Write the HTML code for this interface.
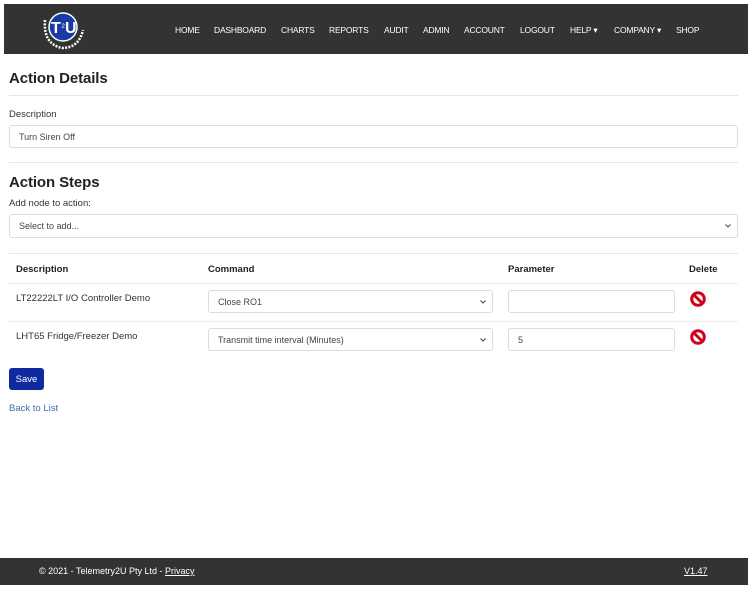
<!DOCTYPE html>
<html><head><style>
*{box-sizing:border-box;margin:0;padding:0}
body{width:756px;height:593px;background:#fff;font-family:"Liberation Sans",sans-serif;color:#222;position:relative;overflow:hidden}
.nav{position:absolute;left:4px;top:4px;width:744px;height:50px;background:#333331}
.nav a{position:absolute;top:21px;color:#fff;font-size:8.5px;letter-spacing:-0.2px}
.abs{position:absolute}
h2{position:absolute;font-size:15px;font-weight:bold;color:#222;left:9px;letter-spacing:-0.1px}
.hr{position:absolute;left:9px;width:729px;height:1px;background:#e6e6e6}
.lbl{position:absolute;font-size:9.5px;color:#333;left:9px}
.inp{position:absolute;border:1px solid #dcdcdc;border-radius:3px;background:#fff;font-size:9px;color:#444;padding-left:9px;display:flex;align-items:center}
.chev{position:absolute;right:6px;top:50%;margin-top:-3px;width:6px;height:6px}
.th{position:absolute;top:264px;font-size:9.5px;font-weight:bold;color:#222}
.td{position:absolute;font-size:9.5px;color:#333}
</style></head><body>
<div class="nav">
<svg class="abs" style="left:37px;top:2px" width="46" height="46" viewBox="0 0 46 46">
<circle cx="22" cy="21" r="14" fill="#1a3aa8" stroke="#fff" stroke-width="1.5"/>
<text x="10" y="27" font-size="16" font-weight="bold" fill="#fff" font-family="Liberation Sans">T</text>
<text x="20.5" y="22" font-size="6" fill="#fff" font-family="Liberation Sans">2</text>
<text x="24" y="27" font-size="16" font-weight="bold" fill="#fff" font-family="Liberation Sans">U</text>
<path d="M4 14 Q2 38 21 42 Q38 42 42 24" fill="none" stroke="#fff" stroke-width="2.5" stroke-dasharray="2 1.3"/>
</svg>
<a style="left:171px">HOME</a><a style="left:210px">DASHBOARD</a><a style="left:277px">CHARTS</a><a style="left:325px">REPORTS</a><a style="left:380px">AUDIT</a><a style="left:419px">ADMIN</a><a style="left:460px">ACCOUNT</a><a style="left:516px">LOGOUT</a><a style="left:566px">HELP ▾</a><a style="left:610px">COMPANY ▾</a><a style="left:672px">SHOP</a>
</div>
<h2 style="top:70px">Action Details</h2>
<div class="hr" style="top:95px"></div>
<div class="lbl" style="top:109px">Description</div>
<div class="inp" style="left:9px;top:125px;width:729px;height:23px">Turn Siren Off</div>
<div class="hr" style="top:162px"></div>
<h2 style="top:174px">Action Steps</h2>
<div class="lbl" style="top:198px">Add node to action:</div>
<div class="inp" style="left:9px;top:214px;width:729px;height:24px">Select to add...<svg class="chev" viewBox="0 0 6 6"><path d="M0.5 1.5L3 4L5.5 1.5" fill="none" stroke="#444" stroke-width="1"/></svg></div>
<div class="hr" style="top:253px"></div>
<div class="th" style="left:16px">Description</div><div class="th" style="left:208px">Command</div><div class="th" style="left:508px">Parameter</div><div class="th" style="left:689px">Delete</div>
<div class="hr" style="top:283px;background:#ececec"></div>
<div class="td" style="left:16px;top:293px">LT22222LT I/O Controller Demo</div>
<div class="inp" style="left:208px;top:290px;width:285px;height:23px">Close RO1<svg class="chev" viewBox="0 0 6 6"><path d="M0.5 1.5L3 4L5.5 1.5" fill="none" stroke="#444" stroke-width="1"/></svg></div>
<div class="inp" style="left:508px;top:290px;width:167px;height:23px"></div>
<svg class="abs" style="left:689px;top:290px" width="18" height="18" viewBox="0 0 18 18"><circle cx="9" cy="9" r="6.3" fill="none" stroke="#d0021b" stroke-width="3"/><path d="M4.5 4.5L13.5 13.5" stroke="#d0021b" stroke-width="3"/></svg>
<div class="hr" style="top:321px;background:#ececec"></div>
<div class="td" style="left:16px;top:331px">LHT65 Fridge/Freezer Demo</div>
<div class="inp" style="left:208px;top:328px;width:285px;height:23px">Transmit time interval (Minutes)<svg class="chev" viewBox="0 0 6 6"><path d="M0.5 1.5L3 4L5.5 1.5" fill="none" stroke="#444" stroke-width="1"/></svg></div>
<div class="inp" style="left:508px;top:328px;width:167px;height:23px">5</div>
<svg class="abs" style="left:689px;top:328px" width="18" height="18" viewBox="0 0 18 18"><circle cx="9" cy="9" r="6.3" fill="none" stroke="#d0021b" stroke-width="3"/><path d="M4.5 4.5L13.5 13.5" stroke="#d0021b" stroke-width="3"/></svg>
<div class="abs" style="left:9px;top:368px;width:35px;height:22px;background:#0f2a9e;border-radius:3px;color:#fff;font-size:9.5px;display:flex;align-items:center;justify-content:center">Save</div>
<div class="abs" style="left:9px;top:403px;font-size:9.5px;color:#3a6fb0">Back to List</div>
<div class="abs" style="left:0;top:558px;width:748px;height:27px;background:#333331"></div>
<div class="abs" style="left:39px;top:566px;font-size:9px;color:#fff">© 2021 - Telemetry2U Pty Ltd - <u>Privacy</u></div>
<div class="abs" style="left:684px;top:566px;font-size:9px;color:#fff"><u>V1.47</u></div>
</body></html>
